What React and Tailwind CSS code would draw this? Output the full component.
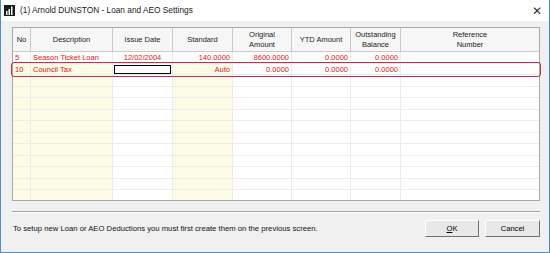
const COLS = [
  { key: 'no', label: ['No'], w: 'w-[18px]', bg: 'bg-[#fcfce6]' },
  { key: 'desc', label: ['Description'], w: 'w-[82px]', bg: 'bg-[#fcfce6]' },
  { key: 'issue', label: ['Issue Date'], w: 'w-[60px]', bg: 'bg-white' },
  { key: 'std', label: ['Standard'], w: 'w-[60px]', bg: 'bg-[#fcfce6]' },
  { key: 'orig', label: ['Original', 'Amount'], w: 'w-[59px]', bg: 'bg-white' },
  { key: 'ytd', label: ['YTD Amount'], w: 'w-[59px]', bg: 'bg-white' },
  { key: 'out', label: ['Outstanding', 'Balance'], w: 'w-[50px]', bg: 'bg-white' },
  { key: 'ref', label: ['Reference', 'Number'], w: 'flex-1', bg: 'bg-white' },
];

const ROWS = [
  { no: '5', desc: 'Season Ticket Loan', issue: '12/02/2004', std: '140.0000', orig: '8600.0000', ytd: '0.0000', out: '0.0000', ref: '' },
  { no: '10', desc: 'Council Tax', issue: null, std: 'Auto', orig: '0.0000', ytd: '0.0000', out: '0.0000', ref: '' },
];

const EMPTY_ROWS = 11;

function Cell({ col, children, align = 'text-right', white }) {
  return (
    <div className={`${col.w} ${white ? 'bg-white' : col.bg} h-full border-r border-[#ececec] last:border-r-0 px-[2px] ${align} truncate`}>
      {children}
    </div>
  );
}

function DataRow({ row, first }) {
  return (
    <div className="flex h-[11.5px] leading-[11.5px] text-[#e01818] border-b border-[#ececec]">
      <Cell col={COLS[0]} align="text-left" white={first}>{row.no}</Cell>
      <Cell col={COLS[1]} align="text-left" white={first}>{row.desc}</Cell>
      <Cell col={COLS[2]} align="text-center" white={first}>
        {row.issue ?? (
          <div className="mt-[1px] mx-[-1px] h-[9.5px] border border-black bg-white" />
        )}
      </Cell>
      <Cell col={COLS[3]} white={first}>{row.std}</Cell>
      <Cell col={COLS[4]} white={first}>{row.orig}</Cell>
      <Cell col={COLS[5]} white={first}>{row.ytd}</Cell>
      <Cell col={COLS[6]} white={first}>{row.out}</Cell>
      <Cell col={COLS[7]} white={first}>{row.ref}</Cell>
    </div>
  );
}

function AppIcon() {
  return (
    <svg width="11" height="11" viewBox="0 0 11 11">
      <rect width="11" height="11" fill="#1a1a1a" />
      <rect x="2" y="6" width="1.5" height="4" fill="#fff" />
      <rect x="4.5" y="4" width="1.5" height="6" fill="#fff" />
      <rect x="7" y="1.5" width="1.5" height="8.5" fill="#fff" />
    </svg>
  );
}

export default function App() {
  return (
    <div className="w-[550px] h-[253px] bg-white font-['Liberation_Sans',Arial,sans-serif] text-[7.5px] text-black overflow-hidden">
      <div className="h-[253px] border-x border-b border-[#4a8fd8] flex flex-col">
        {/* title bar */}
        <div className="h-[21px] shrink-0 bg-white flex items-center pl-[3px] pr-[7px]">
          <AppIcon />
          <span className="ml-[5px] text-[8.3px] text-[#1a1a1a]">(1) Arnold DUNSTON - Loan and AEO Settings</span>
          <span className="ml-auto text-[12px] leading-none text-[#333] font-light">✕</span>
        </div>

        {/* body */}
        <div className="flex-1 bg-[#f0f0f0] pt-[6px] pl-[11px] pr-[9px] flex flex-col">
          <div className="relative h-[174px] border border-[#a8a8a8] bg-white">
            <div className="h-full overflow-hidden">
              {/* header */}
              <div className="flex h-[24px] bg-[#f6f6f6] border-b border-[#c9c9c9]">
                {COLS.map(c => (
                  <div key={c.key} className={`${c.w} h-full border-r border-[#c9c9c9] last:border-r-0 flex flex-col items-center justify-center leading-[9.5px] text-[#222]`}>
                    {c.label.map(l => <span key={l}>{l}</span>)}
                  </div>
                ))}
              </div>
              {ROWS.map((r, i) => <DataRow key={r.no} row={r} first={i === 0} />)}
              {Array.from({ length: EMPTY_ROWS }).map((_, i) => (
                <div key={i} className="flex h-[11.5px] border-b border-[#ececec]">
                  {COLS.map(c => (
                    <div key={c.key} className={`${c.w} ${c.bg} h-full border-r border-[#ececec] last:border-r-0`} />
                  ))}
                </div>
              ))}
            </div>
            {/* selection outline */}
            <div className="absolute left-[-2px] right-[-2px] top-[34px] h-[15px] rounded-[3px] border-[1.5px] border-[#c72c4a] pointer-events-none" />
          </div>

          <div className="mt-[10px] border-t border-[#a0a0a0] border-b border-b-white" />

          <div className="flex items-center mt-[7px]">
            <span className="text-[7.7px] text-[#111] ml-[1px]">To setup new Loan or AEO Deductions you must first create them on the previous screen.</span>
            <div className="ml-auto flex gap-[6px]">
              <button className="w-[54px] h-[17px] bg-[#e8e8e8] border border-t-white border-l-white border-r-[#707070] border-b-[#707070] text-[7.6px]">
                <span className="underline">O</span>K
              </button>
              <button className="w-[55px] h-[17px] bg-[#e8e8e8] border border-t-white border-l-white border-r-[#707070] border-b-[#707070] text-[7.6px]">
                Cancel
              </button>
            </div>
          </div>
        </div>
      </div>
    </div>
  );
}
